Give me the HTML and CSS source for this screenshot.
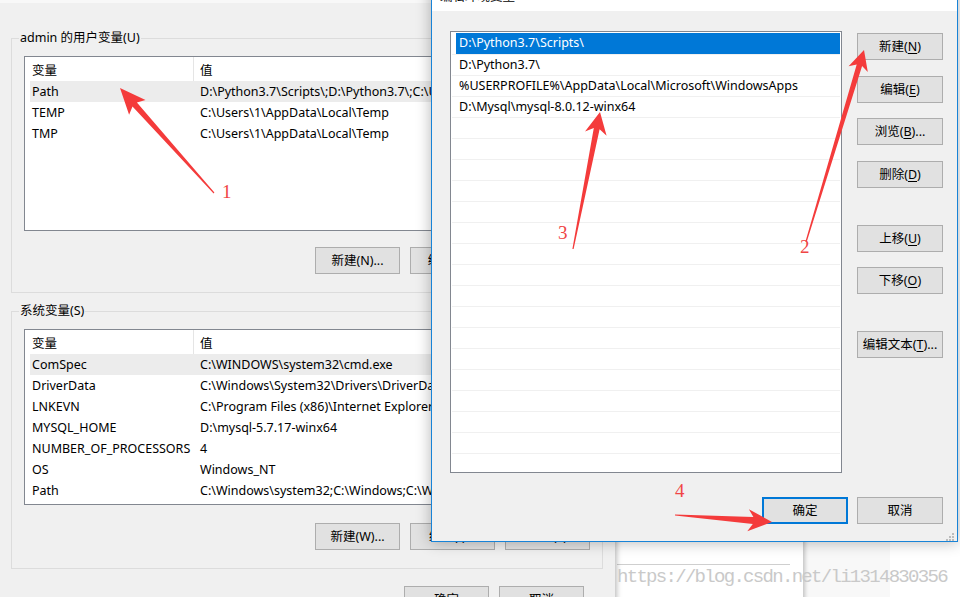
FILE: index.html
```html
<!DOCTYPE html>
<html lang="zh-CN">
<head>
<meta charset="utf-8">
<title>环境变量</title>
<link rel="stylesheet" href="styles.css">
</head>
<body>
<div class="desk">
  <div class="win-far"></div>
  <div class="win-mid"><div class="mid-line"></div></div>

  <section class="win-back">
    <div class="group">
      <div class="group-title">admin 的用户变量(U)</div>
      <div class="listview">
        <div class="lv-head"><span class="c1">变量</span><span class="sep"></span><span class="c2">值</span></div>
        <div class="lv-row sel"><span class="c1">Path</span><span class="c2">D:\Python3.7\Scripts\;D:\Python3.7\;C:\Users\1\AppData\Local\Microsoft\WindowsApps;D:\Mysql\mysql-8.0.12-winx64</span></div>
        <div class="lv-row"><span class="c1">TEMP</span><span class="c2">C:\Users\1\AppData\Local\Temp</span></div>
        <div class="lv-row"><span class="c1">TMP</span><span class="c2">C:\Users\1\AppData\Local\Temp</span></div>
      </div>
      <div class="btn-row">
        <button class="btn">新建(N)...</button>
        <button class="btn">编辑(E)...</button>
        <button class="btn">删除(D)</button>
      </div>
    </div>

    <div class="group">
      <div class="group-title">系统变量(S)</div>
      <div class="listview tall">
        <div class="lv-head"><span class="c1">变量</span><span class="sep"></span><span class="c2">值</span></div>
        <div class="lv-row sel"><span class="c1">ComSpec</span><span class="c2">C:\WINDOWS\system32\cmd.exe</span></div>
        <div class="lv-row"><span class="c1">DriverData</span><span class="c2">C:\Windows\System32\Drivers\DriverData</span></div>
        <div class="lv-row"><span class="c1">LNKEVN</span><span class="c2">C:\Program Files (x86)\Internet Explorer\iexplore.exe</span></div>
        <div class="lv-row"><span class="c1">MYSQL_HOME</span><span class="c2">D:\mysql-5.7.17-winx64</span></div>
        <div class="lv-row"><span class="c1">NUMBER_OF_PROCESSORS</span><span class="c2">4</span></div>
        <div class="lv-row"><span class="c1">OS</span><span class="c2">Windows_NT</span></div>
        <div class="lv-row"><span class="c1">Path</span><span class="c2">C:\Windows\system32;C:\Windows;C:\Windows\System32\Wbem;C:\Windows\System32\WindowsPowerShell\v1.0\</span></div>
      </div>
      <div class="btn-row low">
        <button class="btn">新建(W)...</button>
        <button class="btn">编辑(I)...</button>
        <button class="btn">删除(L)</button>
      </div>
    </div>

    <div class="back-footer">
      <button class="btn">确定</button>
      <button class="btn">取消</button>
    </div>
  </section>

  <section class="win-front">
    <div class="titlebar">编辑环境变量</div>
    <div class="front-body">
      <div class="front-top">
        <div class="pathlist">
          <div class="pl-row sel">D:\Python3.7\Scripts\</div>
          <div class="pl-row">D:\Python3.7\</div>
          <div class="pl-row">%USERPROFILE%\AppData\Local\Microsoft\WindowsApps</div>
          <div class="pl-row">D:\Mysql\mysql-8.0.12-winx64</div>
          <div class="pl-row"></div><div class="pl-row"></div><div class="pl-row"></div><div class="pl-row"></div>
          <div class="pl-row"></div><div class="pl-row"></div><div class="pl-row"></div><div class="pl-row"></div>
          <div class="pl-row"></div><div class="pl-row"></div><div class="pl-row"></div><div class="pl-row"></div>
          <div class="pl-row"></div><div class="pl-row"></div><div class="pl-row"></div><div class="pl-row"></div>
          <div class="pl-row"></div>
        </div>
        <div class="side-btns">
          <button class="btn wide">新建(<u>N</u>)</button>
          <button class="btn wide s16">编辑(<u>E</u>)</button>
          <button class="btn wide s15">浏览(<u>B</u>)...</button>
          <button class="btn wide s16">删除(<u>D</u>)</button>
          <button class="btn wide s37">上移(<u>U</u>)</button>
          <button class="btn wide s15">下移(<u>O</u>)</button>
          <button class="btn wide s37">编辑文本(<u>T</u>)...</button>
        </div>
      </div>
      <div class="front-bottom">
        <button class="btn wide default">确定</button>
        <button class="btn wide">取消</button>
      </div>
    </div>
    <svg class="grip" width="9" height="9" viewBox="0 0 9 9">
      <rect x="7" y="1" width="2" height="2"/>
      <rect x="4" y="4" width="2" height="2"/><rect x="7" y="4" width="2" height="2"/>
      <rect x="1" y="7" width="2" height="2"/><rect x="4" y="7" width="2" height="2"/><rect x="7" y="7" width="2" height="2"/>
    </svg>
  </section>

  <svg class="annot" width="960" height="597" viewBox="0 0 960 597">
    <polygon points="120,88 145.5,100.1 136.9,102.4 214.4,192.6 213.6,193.4 132.5,106.4 129.1,114.7"/>
    <polygon points="864,50 867.8,72 862.1,66.1 806.6,242.2 805.4,241.8 856.7,64.5 848.6,66.2"/>
    <polygon points="600,112 606.6,135.7 599.6,129.3 573.6,249.1 572.4,248.9 593.8,128.1 585,131.5"/>
    <polygon points="772,522 747.3,531.3 752.8,524.1 675,515.6 675,514.4 753.4,517.1 748.9,509.3"/>
  </svg>
  <span class="num n1">1</span>
  <span class="num n2">2</span>
  <span class="num n3">3</span>
  <span class="num n4">4</span>
  <div class="watermark">https://blog.csdn.net/li1314830356</div>
</div>
</body>
</html>
```

FILE: styles.css
```css
* { box-sizing: border-box; }
html, body { margin: 0; padding: 0; }
body {
  width: 960px;
  height: 597px;
  overflow: hidden;
  font-family: "Noto Sans", "Noto Sans CJK SC", sans-serif;
  font-size: 12.5px;
  color: #000;
}
.desk {
  position: relative;
  width: 960px;
  height: 597px;
  overflow: hidden;
  background: #fff;
}

/* windows lying behind */
.win-mid {
  position: absolute;
  left: 615px;
  top: 400px;
  width: 188px;
  height: 300px;
  background: #fff;
  box-shadow: 2px 0 4px rgba(0,0,0,.22);
  padding-top: 164px;
}
.mid-line { height: 1px; width: 173px; margin-left: 2px; background: #cfcfcf; }
.win-far {
  position: absolute;
  left: 803px;
  top: 400px;
  width: 87px;
  height: 300px;
  background: #f8f8f8;
}

/* back dialog: environment variables */
.win-back {
  position: absolute;
  left: 0;
  top: 0;
  width: 615px;
  height: 640px;
  background: #f0f0f0;
  border-top: 3px solid #f8f8f8;
  padding: 35px 0 0 11px;
  box-shadow: 2px 0 5px rgba(0,0,0,.25);
}
.group {
  width: 592px;
  border: 1px solid #dcdcdc;
  padding: 0 12px 18px;
}
.group + .group { margin-top: 18px; }
.group-title {
  margin: -9px 0 0 -5px;
  height: 16px;
  line-height: 16px;
  padding: 0 1px;
  background: #f0f0f0;
  width: max-content;
}
.listview {
  margin-top: 10px;
  height: 175px;
  border: 1px solid #828790;
  background: #fff;
  overflow: hidden;
}
.listview.tall { height: 176px; }
.lv-head { display: flex; height: 24px; align-items: center; }
.lv-head .c1 { width: 168px; padding-left: 7px; flex: none; }
.lv-head .sep { width: 1px; height: 24px; background: #e5e5e5; flex: none; }
.lv-head .c2 { padding-left: 6px; }
.lv-row {
  display: flex;
  height: 21px;
  line-height: 21px;
  margin-left: 5px;
  white-space: nowrap;
}
.lv-row .c1 { width: 170px; padding-left: 2px; flex: none; overflow: hidden; }
.lv-row.sel { background: #ececec; }

.btn {
  font: inherit;
  color: #000;
  width: 85px;
  height: 27px;
  padding: 0;
  background: #e1e1e1;
  border: 1px solid #adadad;
  border-radius: 0;
  line-height: 25px;
  white-space: nowrap;
}
.btn u { text-underline-offset: 2px; }
.btn-row {
  display: flex;
  justify-content: flex-end;
  gap: 10px;
  margin-top: 16px;
}
.btn-row.low { margin-top: 18px; }
.back-footer {
  display: flex;
  justify-content: flex-end;
  gap: 10px;
  margin-top: 17px;
  padding-right: 31px;
}

/* front dialog: edit environment variable */
.win-front {
  position: absolute;
  left: 431px;
  top: -19px;
  width: 527px;
  height: 561px;
  background: #f0f0f0;
  border: 1px solid #1883d7;
  box-shadow: 0 0 14px rgba(0,0,0,.3);
}
.titlebar {
  height: 29px;
  background: #fff;
  padding: 7px 8px 0;
  line-height: 16px;
}
.front-body {
  height: 530px;
  padding: 20px 14px 17px 18px;
  display: flex;
  flex-direction: column;
}
.front-top { display: flex; gap: 15px; }
.pathlist {
  width: 392px;
  height: 442px;
  flex: none;
  border: 1px solid #828790;
  background: #fff;
  padding: 1px 1px 0;
  overflow: hidden;
}
.pl-row {
  height: 21px;
  line-height: 20px;
  padding-left: 7px;
  white-space: nowrap;
}
.pl-row + .pl-row { border-top: 1px solid #f0f0f0; }
.pl-row.sel {
  background: linear-gradient(90deg, #fff 4px, #0078d7 4px);
  color: #fff;
}
.side-btns {
  display: flex;
  flex-direction: column;
  width: 86px;
  padding-top: 2px;
}
.btn.wide { width: 86px; }
.s15 { margin-top: 15px; }
.s16 { margin-top: 16px; }
.s37 { margin-top: 37px; }
.front-bottom {
  display: flex;
  justify-content: flex-end;
  gap: 9px;
  margin-top: 24px;
}
.btn.default { border: 2px solid #0078d7; line-height: 23px; }
.grip {
  position: absolute;
  right: 3px;
  bottom: 0;
  fill: #bcbcbc;
}

/* annotations */
.annot {
  position: absolute;
  left: 0;
  top: 0;
  fill: #f43b3b;
}
.num {
  position: absolute;
  font-family: "Liberation Serif", serif;
  font-size: 19px;
  line-height: 19px;
  color: #f04545;
}
.n1 { left: 222px; top: 182px; }
.n2 { left: 800px; top: 237px; }
.n3 { left: 558px; top: 223px; }
.n4 { left: 675px; top: 481px; }
.watermark {
  position: absolute;
  left: 617px;
  top: 566px;
  font-family: "Liberation Mono", monospace;
  font-size: 19px;
  letter-spacing: -1.7px;
  line-height: 22px;
  color: #c9c9c9;
  white-space: nowrap;
}
```
